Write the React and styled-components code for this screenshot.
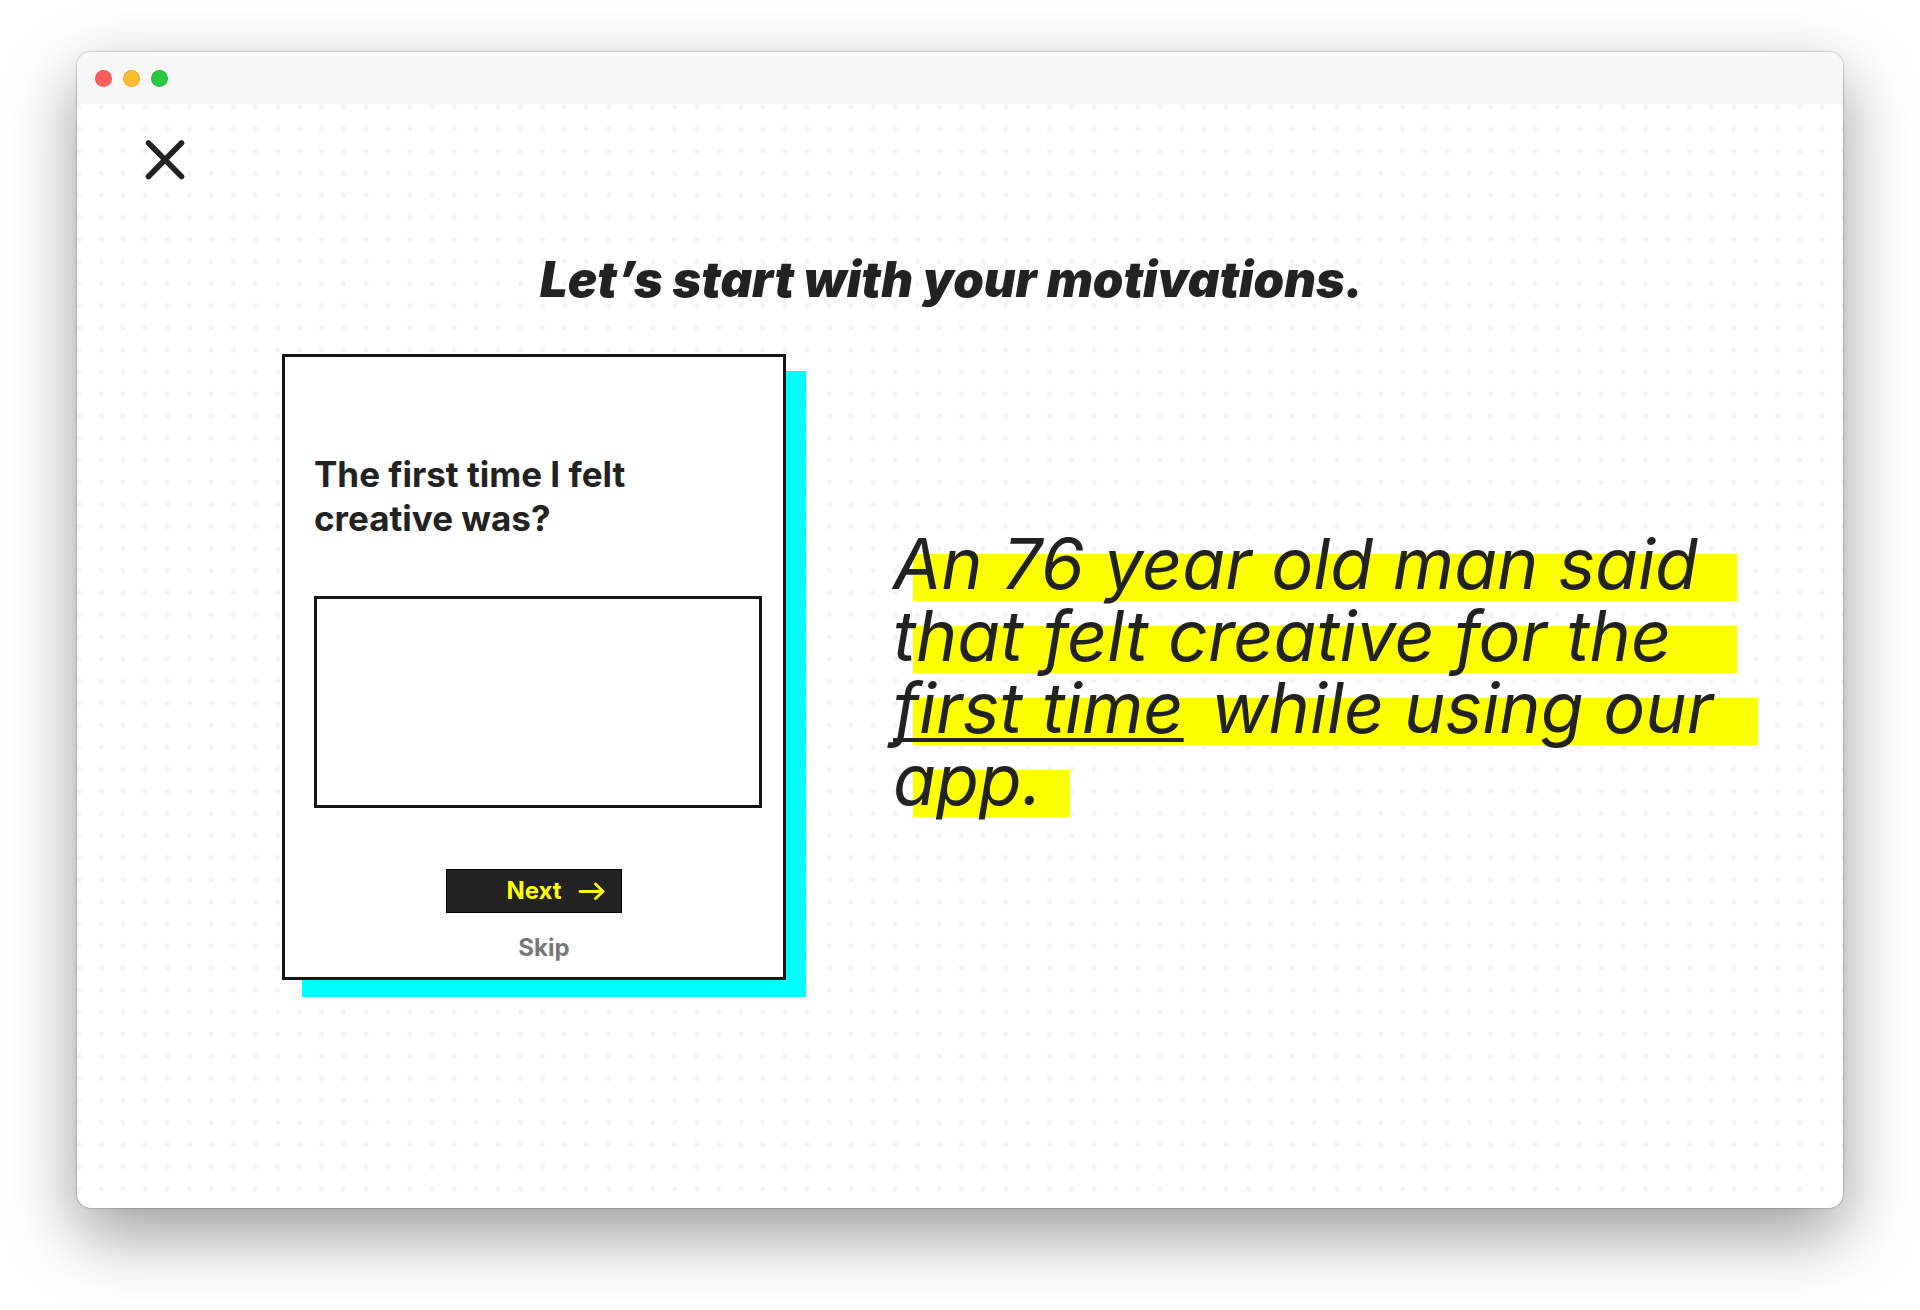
import React from "react";
import styled, { createGlobalStyle } from "styled-components";

const ink = "#222222";
const yellow = "#ffff00";

const GlobalStyle = createGlobalStyle`
  *, *::before, *::after { box-sizing: border-box; }
  body {
    margin: 0;
    background: #ffffff;
    color: ${ink};
    font-family: Inter, "Liberation Sans", sans-serif;
  }
`;

const Desktop = styled.div`
  display: flex;
  min-height: 100vh;
  padding: 52px 77px 102px;
`;

const Window = styled.div`
  flex: 1;
  min-width: 0;
  display: flex;
  flex-direction: column;
  overflow: hidden;
  background: #ffffff;
  border-radius: 14px;
  box-shadow: 0 0 2px rgba(0, 0, 0, 0.5), 0 26px 70px rgba(0, 0, 0, 0.4);
`;

const TitleBar = styled.header`
  display: flex;
  align-items: center;
  gap: 11px;
  height: 52px;
  padding: 0 18px;
  background: #f7f7f7;
`;

const Light = styled.span`
  width: 17px;
  height: 17px;
  border: 1px solid rgba(0, 0, 0, 0.1);
  border-radius: 50%;
  background: ${(p) => p.$color};
`;

const Page = styled.main`
  flex: 1;
  padding: 36px 35px 80px 68px;
  background-image: radial-gradient(circle at 11px 11px, #f2f2f2 2px, transparent 3px);
  background-size: 22px 22px;
  background-position: -9px -8px;
  background-repeat: round;
`;

const CloseButton = styled.button`
  display: block;
  width: 40px;
  height: 40px;
  padding: 0;
  border: 0;
  background: none;
  color: ${ink};
  cursor: pointer;
`;

const Title = styled.h1`
  margin: 70px 50px 44px 0;
  font-size: 49px;
  font-style: italic;
  font-weight: 900;
  line-height: 60px;
  text-align: center;
`;

const Columns = styled.div`
  display: flex;
  align-items: center;
  gap: 107px;
  padding-left: 137px;
`;

const Card = styled.form`
  flex: 0 1 504px;
  display: flex;
  flex-direction: column;
  align-items: center;
  padding: 95px 21px 15px 29px;
  border: 3px solid #161616;
  background: #ffffff;
  box-shadow: 20px 17px 0 #00ffff;
`;

const Question = styled.label`
  align-self: flex-start;
  max-width: 360px;
  font-size: 35px;
  font-weight: 700;
  line-height: 44px;
`;

const Answer = styled.textarea`
  display: block;
  width: 100%;
  height: 212px;
  margin: 56px 0 61px;
  padding: 16px;
  border: 3px solid #161616;
  border-radius: 0;
  outline: 0;
  background: #ffffff;
  color: ${ink};
  font: 500 24px/32px Inter, sans-serif;
  resize: none;
`;

const NextButton = styled.button`
  display: grid;
  grid-template-columns: 1fr auto 1fr;
  align-items: center;
  width: 176px;
  height: 44px;
  margin-right: 8px;
  padding: 0 16px;
  border: 1px solid #000000;
  background: ${ink};
  color: ${yellow};
  font: 700 24px/28px Inter, sans-serif;
  cursor: pointer;

  span { grid-column: 2; }
  svg { justify-self: end; }
`;

const SkipButton = styled.button`
  margin: 21px 0 0 12px;
  padding: 0;
  border: 0;
  background: none;
  color: #777777;
  font: 700 24px/28px Inter, sans-serif;
  cursor: pointer;
`;

const Quote = styled.blockquote`
  display: flex;
  flex-direction: column;
  align-items: flex-start;
  margin: 0;
  padding-top: 12px;
  font-size: 70px;
  font-style: italic;
  font-weight: 400;
`;

const QuoteLine = styled.span`
  min-width: ${(p) => p.$width}px;
  padding-bottom: 2px;
  background: linear-gradient(${yellow}, ${yellow}) 20px 100% / 100% 47px no-repeat;
  line-height: 70px;
  white-space: nowrap;
`;

const Underlined = styled.u`
  margin-right: 8px;
  text-decoration-thickness: 4px;
  text-underline-offset: 5px;
  text-decoration-skip-ink: none;
`;

const lights = ["#ff5f57", "#febc2e", "#28c840"];

export default function App() {
  return (
    <>
      <GlobalStyle />
      <Desktop>
        <Window>
          <TitleBar>
            {lights.map((color) => (
              <Light key={color} $color={color} />
            ))}
          </TitleBar>
          <Page>
            <CloseButton type="button" aria-label="Close">
              <svg width="40" height="40" viewBox="0 0 40 40" fill="none" stroke="currentColor" strokeWidth="5.6" strokeLinecap="round">
                <path d="M3.5 3 36.5 36.5M36.5 3 3.5 36.5" />
              </svg>
            </CloseButton>
            <Title>Let’s start with your motivations.</Title>
            <Columns>
              <Card onSubmit={(e) => e.preventDefault()}>
                <Question htmlFor="answer">The first time I felt creative was?</Question>
                <Answer id="answer" />
                <NextButton type="submit">
                  <span>Next</span>
                  <svg width="27" height="18" viewBox="0 0 27 18" fill="none" stroke="currentColor" strokeWidth="2.8" strokeLinecap="round" strokeLinejoin="round">
                    <path d="M2 9.5H25M17.5 2 25 9.5 17.5 16.5" />
                  </svg>
                </NextButton>
                <SkipButton type="button">Skip</SkipButton>
              </Card>
              <Quote>
                <QuoteLine $width={844}>An 76 year old man said</QuoteLine>
                <QuoteLine $width={844}>that felt creative for the</QuoteLine>
                <QuoteLine $width={865}>
                  <Underlined>first time</Underlined> while using our
                </QuoteLine>
                <QuoteLine $width={177}>app.</QuoteLine>
              </Quote>
            </Columns>
          </Page>
        </Window>
      </Desktop>
    </>
  );
}
